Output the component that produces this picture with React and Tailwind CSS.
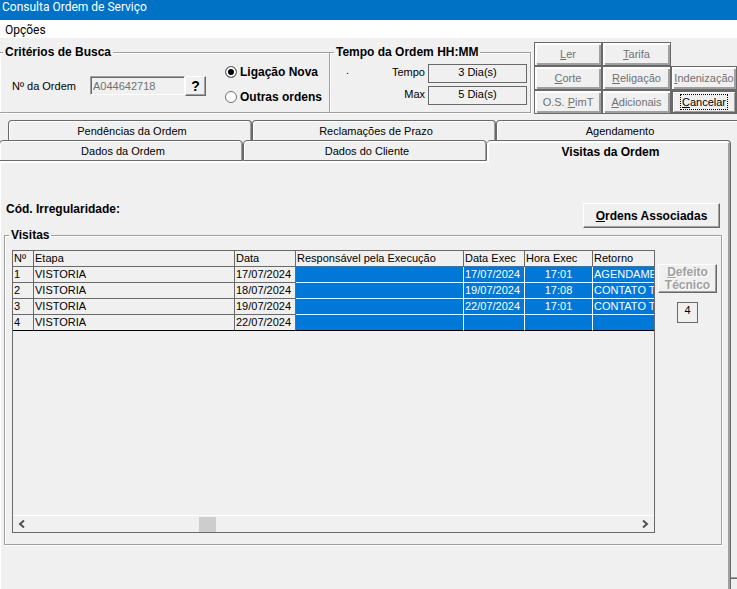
import React from "react";

const topTabs = ["Pendências da Ordem", "Reclamações de Prazo", "Agendamento"];

const columns = [
  { title: "Nº", width: "w-[21px]" },
  { title: "Etapa", width: "w-[201px]" },
  { title: "Data", width: "w-[61px]" },
  { title: "Responsável pela Execução", width: "w-[168px]" },
  { title: "Data Exec", width: "w-[61px]" },
  { title: "Hora Exec", width: "w-[68px]" },
  { title: "Retorno", width: "" },
];

const visits = [
  ["1", "VISTORIA", "17/07/2024", "", "17/07/2024", "17:01", "AGENDAME"],
  ["2", "VISTORIA", "18/07/2024", "", "19/07/2024", "17:08", "CONTATO T"],
  ["3", "VISTORIA", "19/07/2024", "", "22/07/2024", "17:01", "CONTATO T"],
  ["4", "VISTORIA", "22/07/2024", "", "", "", ""],
];

function GroupBox({ title, className, legendClass, children }) {
  return (
    <fieldset
      className={
        "min-w-0 border-[#a0a0a0] shadow-[1px_1px_0_#fff,inset_1px_1px_0_#fff] " + className
      }
    >
      <legend className={"h-[14px] px-[2px] text-xs leading-[14px] font-bold " + legendClass}>
        {title}
      </legend>
      {children}
    </fieldset>
  );
}

function ToolButton({ hotkey, before = "", after }) {
  return (
    <button
      type="button"
      disabled
      className="overflow-hidden border border-[#696969] text-center whitespace-nowrap text-[#707070] shadow-[inset_2px_2px_0_#fff,inset_-2px_-2px_0_#a0a0a0]"
    >
      {before}
      <u>{hotkey}</u>
      {after}
    </button>
  );
}

function Radio({ id, label, defaultChecked }) {
  return (
    <div className="flex items-center gap-[3px]">
      <input
        type="radio"
        id={id}
        name="tipo"
        defaultChecked={defaultChecked}
        className="size-3 appearance-none rounded-full border border-[#707070] bg-white checked:bg-black checked:shadow-[inset_0_0_0_2px_#fff]"
      />
      <label htmlFor={id} className="text-xs leading-[14px] font-bold whitespace-nowrap">
        {label}
      </label>
    </div>
  );
}

function Tab({ label, edge }) {
  return (
    <button
      type="button"
      role="tab"
      aria-selected="false"
      className={
        "h-[21px] rounded-t-[4px] border-x border-t border-[#696969] pl-1 text-center shadow-[inset_1px_1px_0_#fff,inset_-1px_0_0_#a0a0a0] " +
        edge
      }
    >
      {label}
    </button>
  );
}

function TimeRow({ id, label, value }) {
  return (
    <div className="flex items-start">
      <label htmlFor={id} className="flex-1 pr-[3px] text-right leading-[17px]">
        {label}
      </label>
      <output
        id={id}
        className="h-[19px] w-[99px] border border-[#696969] text-center leading-[15px]"
      >
        {value}
      </output>
    </div>
  );
}

function VisitCell({ value, index, last }) {
  const selected = index > 2;
  const tone = selected
    ? "bg-[#0078d7] text-white border-r-white "
    : "border-r-[#696969] ";
  const bottom = last ? "border-b-black " : selected ? "border-b-white " : "border-b-[#696969] ";
  const side = index === 6 ? "border-r-0 " : "border-r ";
  const align = index === 5 ? "text-center" : "pl-px";
  return (
    <td
      className={
        "h-4 overflow-hidden border-b p-0 leading-[15px] whitespace-nowrap " +
        tone + bottom + side + align
      }
    >
      {value}
    </td>
  );
}

function VisitsGrid() {
  return (
    <div className="flex h-[283px] min-w-0 flex-1 flex-col border border-[#696969]">
      <table className="w-full table-fixed border-separate border-spacing-0">
        <thead>
          <tr>
            {columns.map((c, i) => (
              <th
                key={c.title}
                scope="col"
                className={
                  "h-4 overflow-hidden border-b border-[#696969] p-0 pl-px text-left leading-[15px] font-normal whitespace-nowrap " +
                  (i === 6 ? "border-r-0 " : "border-r ") +
                  c.width
                }
              >
                {c.title}
              </th>
            ))}
          </tr>
        </thead>
        <tbody>
          {visits.map((row, r) => (
            <tr key={row[0]}>
              {row.map((value, i) => (
                <VisitCell key={i} value={value} index={i} last={r === visits.length - 1} />
              ))}
            </tr>
          ))}
        </tbody>
      </table>
      <div className="mt-auto flex h-[17px] items-center border-t border-white px-[5px]">
        <button type="button" aria-label="Rolar para a esquerda">
          <svg width="7" height="8" viewBox="0 0 7 8" fill="none" stroke="#505050" strokeWidth="2">
            <path d="M6 0.5 L2 4 L6 7.5" />
          </svg>
        </button>
        <div className="flex-1 pl-[174px]">
          <div className="h-[15px] w-[17px] bg-[#cdcdcd]" />
        </div>
        <button type="button" aria-label="Rolar para a direita">
          <svg width="7" height="8" viewBox="0 0 7 8" fill="none" stroke="#505050" strokeWidth="2">
            <path d="M1 0.5 L5 4 L1 7.5" />
          </svg>
        </button>
      </div>
    </div>
  );
}

export default function App() {
  return (
    <div className="flex min-h-screen flex-col overflow-hidden bg-[#f0f0f0] font-['Liberation_Sans',Arial,sans-serif] text-[11px] leading-[14px] text-black">
      <header className="h-5 bg-[#0072c6] pl-[2px] font-[Roboto,'Noto_Sans',sans-serif] text-xs leading-[14px] text-white">
        Consulta Ordem de Serviço
      </header>
      <nav className="h-[18px] bg-white pl-[5px] font-[Roboto,'Noto_Sans',sans-serif] text-xs leading-5">
        <button type="button">Opções</button>
      </nav>

      <section className="flex items-start pt-1">
        <GroupBox
          title="Critérios de Busca"
          className="mt-[3px] flex-1 border-y"
          legendClass="ml-[3px]"
        >
          <div className="flex h-[53px] items-center pl-3">
            <label htmlFor="ordem" className="w-[78px] shrink-0">
              Nº da Ordem
            </label>
            <input
              id="ordem"
              disabled
              defaultValue="A044642718"
              className="h-[19px] w-[95px] border border-t-[#a0a0a0] border-r-white border-b-white border-l-[#a0a0a0] pl-[2px] text-[#707070] shadow-[inset_1px_1px_0_#696969]"
            />
            <button
              type="button"
              className="h-5 w-[21px] border border-t-white border-r-[#696969] border-b-[#696969] border-l-white text-center text-sm leading-[14px] font-bold shadow-[inset_-1px_-1px_0_#a0a0a0]"
            >
              ?
            </button>
            <div className="flex flex-col gap-[11px] pb-[3px] pl-[19px]">
              <Radio id="nova" label="Ligação Nova" defaultChecked />
              <Radio id="outras" label="Outras ordens" />
            </div>
          </div>
        </GroupBox>

        <GroupBox
          title="Tempo da Ordem HH:MM"
          className="mt-[3px] w-[202px] border"
          legendClass="ml-[4px]"
        >
          <div className="flex h-[53px] pt-[5px] pr-[3px]">
            <span className="pl-4 leading-3">.</span>
            <div className="flex flex-1 flex-col gap-[3px]">
              <TimeRow id="tempo" label="Tempo" value="3 Dia(s)" />
              <TimeRow id="max" label="Max" value="5 Dia(s)" />
            </div>
          </div>
        </GroupBox>

        <div className="ml-[3px] grid w-[203px] grid-cols-[68px_69px_66px] grid-rows-[24px_24px_24px]">
          <ToolButton hotkey="L" after="er" />
          <ToolButton hotkey="T" after="arifa" />
          <span />
          <ToolButton hotkey="C" after="orte" />
          <ToolButton hotkey="R" after="eligação" />
          <ToolButton hotkey="I" after="ndenização" />
          <ToolButton before="O.S. " hotkey="P" after="imT" />
          <ToolButton hotkey="A" after="dicionais" />
          <button
            type="button"
            className="flex items-center justify-center border-2 border-[#696969] shadow-[inset_1px_1px_0_#fff,inset_-1px_-1px_0_#a0a0a0]"
          >
            <span className="border border-dotted border-black px-px">
              <u>C</u>ancelar
            </span>
          </button>
        </div>
      </section>

      <div role="tablist" className="-mr-[3px] grid grid-cols-3 pt-[6px] pl-2">
        {topTabs.map((t) => (
          <Tab key={t} label={t} edge="border-b-0" />
        ))}
      </div>

      <div className="-mt-px flex flex-1">
        <main className="flex flex-1 flex-col">
          <div role="tablist" className="-ml-px grid grid-cols-3 items-start bg-[#f0f0f0]">
            <div className="flex flex-col border-b-2 border-white">
              <Tab label="Dados da Ordem" edge="border-b" />
            </div>
            <div className="flex flex-col border-b-2 border-white">
              <Tab label="Dados do Cliente" edge="border-b" />
            </div>
            <button
              type="button"
              role="tab"
              aria-selected="true"
              className="h-[23px] rounded-t-[4px] border-t border-r border-[#696969] pl-1 text-center text-xs leading-[14px] font-bold shadow-[inset_2px_2px_0_#fff,inset_-2px_0_0_#a0a0a0]"
            >
              Visitas da Ordem
            </button>
          </div>

          <div className="flex-1 border-r border-l border-r-[#696969] border-l-white pr-2 pl-[3px] shadow-[inset_-2px_0_0_#a0a0a0]">
            <div className="flex items-start justify-between pt-[39px] pr-[2px] pl-[2px]">
              <span className="text-xs leading-[14px] font-bold">Cód. Irregularidade:</span>
              <button
                type="button"
                className="mt-px h-[25px] w-[137px] border border-t-white border-r-[#696969] border-b-[#696969] border-l-white text-center text-xs font-bold shadow-[inset_-1px_-1px_0_#a0a0a0]"
              >
                <u>O</u>rdens Associadas
              </button>
            </div>

            <GroupBox title="Visitas" className="border pb-[11px]" legendClass="ml-[4px]">
              <div className="flex pt-2 pl-[7px]">
                <VisitsGrid />
                <div className="flex w-[66px] flex-col items-center pt-[14px] pr-px">
                  <button
                    type="button"
                    disabled
                    className="h-[29px] w-[59px] border border-t-white border-r-[#696969] border-b-[#696969] border-l-white text-center text-xs leading-[13px] font-bold text-[#a0a0a0] shadow-[inset_-1px_-1px_0_#a0a0a0] [text-shadow:1px_1px_0_#fff]"
                  >
                    <span className="block">
                      <u>D</u>efeito
                    </span>
                    <span className="block">Técnico</span>
                  </button>
                  <output className="mt-[9px] h-[21px] w-[21px] border border-[#696969] text-center leading-[15px]">
                    4
                  </output>
                </div>
              </div>
            </GroupBox>
          </div>
        </main>
        <div className="mb-[10px] w-[6px] border-b border-[#696969] shadow-[inset_0_-1px_0_#a0a0a0]" />
      </div>
    </div>
  );
}
